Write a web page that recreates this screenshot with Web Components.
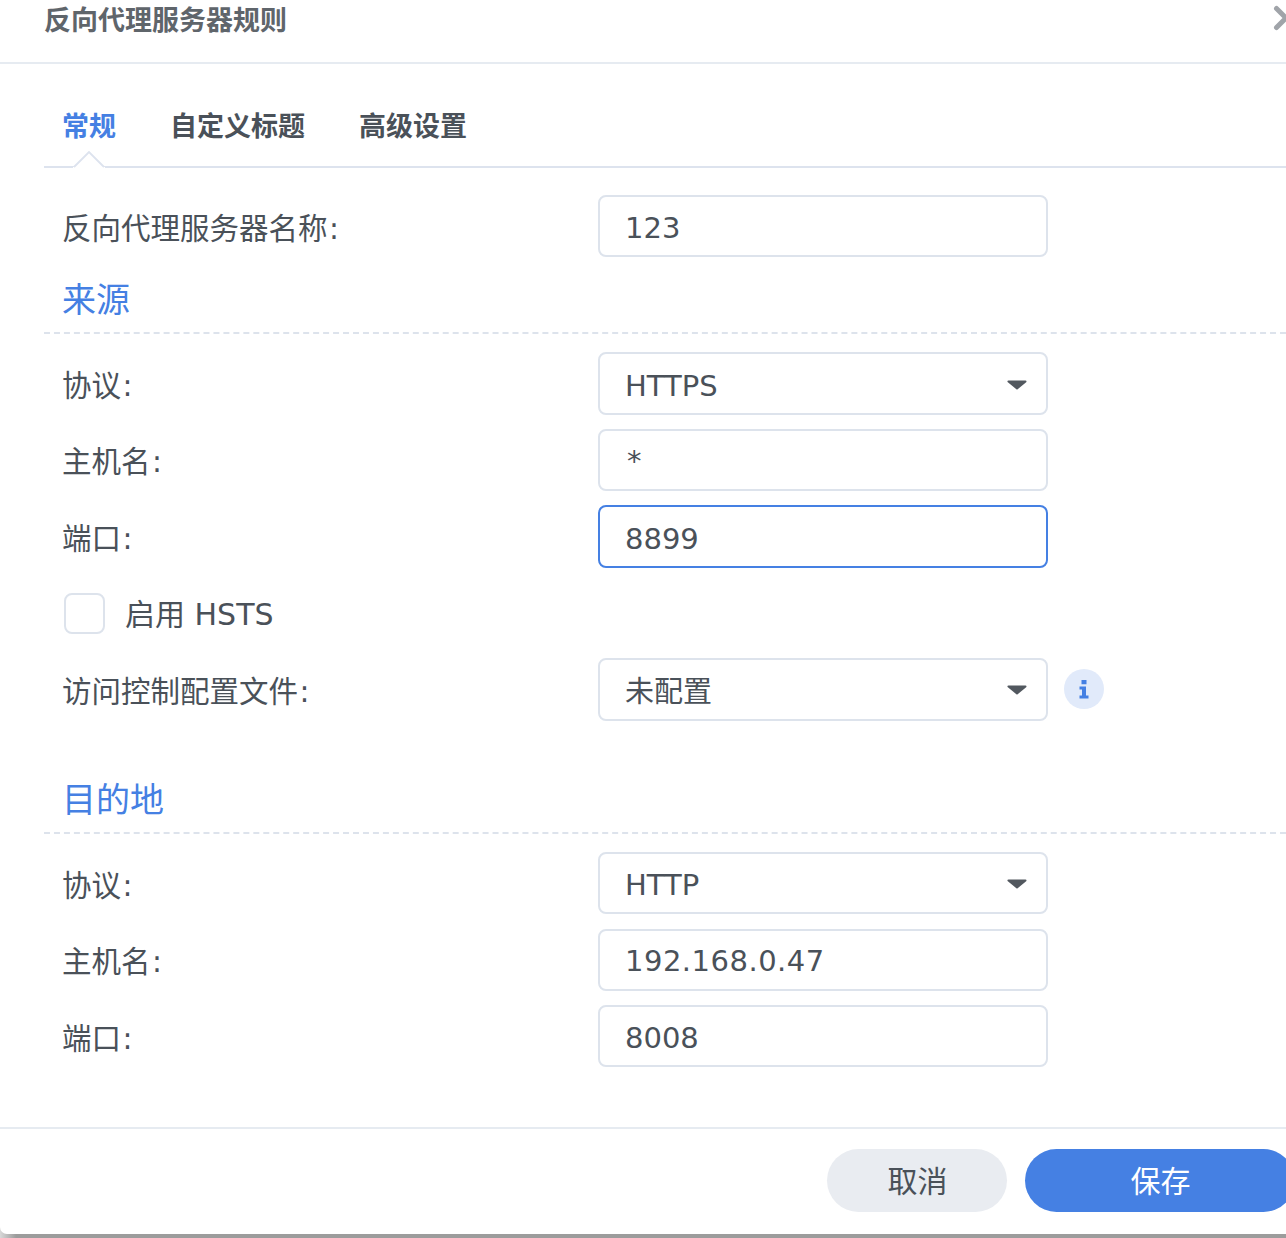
<!DOCTYPE html>
<html lang="zh-CN"><head><meta charset="utf-8"><title>反向代理服务器规则</title>
<style>
html,body{margin:0;padding:0;height:1238px;overflow:hidden}
body{background:linear-gradient(90deg,#d8d8d8 0,#9c9c9c 16px);font-family:"DejaVu Sans","Noto Sans CJK SC",sans-serif;color:#4a5159}
</style></head><body>
<rp-dialog>
  <rp-header slot="header">反向代理服务器规则</rp-header>
  <rp-tabs slot="tabs"><span>常规</span><span>自定义标题</span><span>高级设置</span></rp-tabs>
  <rp-row style="margin-top:27px" label="反向代理服务器名称:"><rp-field style="--h:62px">123</rp-field></rp-row>
  <rp-section style="margin-top:21.500px">来源</rp-section>
  <rp-row style="margin-top:18px" label="协议:"><rp-field select style="--h:63px">HTTPS</rp-field></rp-row>
  <rp-row style="margin-top:14px" label="主机名:"><rp-field style="--pt:2px;--pl:2px">*</rp-field></rp-row>
  <rp-row style="margin-top:14px" label="端口:"><rp-field focus style="--h:63px">8899</rp-field></rp-row>
  <rp-check style="margin-top:25px">启用 HSTS</rp-check>
  <rp-row style="margin-top:24px" label="访问控制配置文件:"><rp-field select style="--pt:6px;--h:63px">未配置</rp-field><rp-info></rp-info></rp-row>
  <rp-section style="margin-top:59px">目的地</rp-section>
  <rp-row style="margin-top:18px" label="协议:"><rp-field select style="--h:62px">HTTP</rp-field></rp-row>
  <rp-row style="margin-top:14px" label="主机名:"><rp-field style="letter-spacing:.5px;--pt:3px">192.168.0.47</rp-field></rp-row>
  <rp-row style="margin-top:14px" label="端口:"><rp-field style="--h:62px;--pt:3px">8008</rp-field></rp-row>
  <rp-footer slot="footer"><rp-button>取消</rp-button><rp-button primary>保存</rp-button></rp-footer>
</rp-dialog>
<script>
function def(name,html,init){
  customElements.define(name,class extends HTMLElement{
    constructor(){super();this.attachShadow({mode:'open'}).innerHTML=html;}
    connectedCallback(){if(init)init(this);}
  });
}
const font='font-family:"DejaVu Sans","Noto Sans CJK SC",sans-serif;';
def('rp-dialog',`<style>:host{display:block;width:1286px;height:1234px;background:#fff;overflow:hidden;border-radius:0 0 0 7px;${font}color:#4a5159}
.wrap{display:flex;flex-direction:column}</style><div class="wrap"><slot name="header"></slot><slot name="tabs"></slot><slot></slot><slot name="footer"></slot></div>`);
def('rp-header',`<style>:host{display:flex;height:62px;border-bottom:2px solid #e6ebf1;padding-left:44px;font-size:27px;line-height:42px;font-weight:700;color:#5f656b;overflow:hidden}
.t{flex:1}svg{display:block;width:14px;height:40px;flex:none}</style><div class="t"><slot></slot></div>
<svg viewBox="0 0 14 40"><path d="M4.500 8.500 L14 18 L4.500 27.500 M24 8.500 L14 18 L24 27.500" fill="none" stroke="#a0a4a9" stroke-width="5" stroke-linecap="round"/></svg>`);
def('rp-tabs',`<style>:host{display:block;position:relative;margin-left:44px;height:102px;border-bottom:2px solid #dde3ee}
.t{display:flex;gap:54px;padding:43px 0 0 18px;font-size:27px;line-height:40px;font-weight:700;color:#4a5159}
::slotted(span:first-child){color:#4580e3}
svg{position:absolute;left:29px;bottom:-2px;width:32px;height:17px;display:block}</style>
<div class="t"><slot></slot></div>
<svg viewBox="0 0 32 17"><path d="M0 16 H1 L16 1 L31 16 H32 V17 H0Z" fill="#fff"/><path d="M1 16 L16 1 L31 16" fill="none" stroke="#dde3ee" stroke-width="1.800"/></svg>`);
def('rp-row',`<style>:host{display:grid;grid-template-columns:536px 450px auto;height:62.500px;padding-left:62px;align-items:center;font-size:29.500px;color:#4a5159}
.l{line-height:40px;white-space:nowrap;padding-top:5px}.c{padding-left:1.500px}</style><div class="l"></div><slot></slot>`,
el=>{const l=el.getAttribute('label'),b=el.shadowRoot.querySelector('.l');
  b.textContent=l.slice(0,-1);const c=document.createElement('span');c.className='c';c.textContent=l.slice(-1);b.append(c);});
def('rp-field',`<style>:host{display:flex;align-self:start;align-items:center;box-sizing:border-box;height:var(--h,62.500px);width:450px;border:2px solid #dde3ec;border-radius:8px;padding:0 19px 0 25px;background:#fff;font-size:29px;line-height:40px;color:#4a5159}
:host([focus]){border-color:#4580e3}
.v{flex:1;white-space:nowrap;padding-top:var(--pt,4px);padding-left:var(--pl,0)}svg{display:none;width:20px;height:10px;flex:none;margin-top:2px}
:host([select]) svg{display:block}</style><div class="v"><slot></slot></div>
<svg viewBox="0 0 20 10"><path d="M1.500 1.500 H18.500 L10 8.500Z" fill="#52585f" stroke="#52585f" stroke-width="2" stroke-linejoin="round"/></svg>`);
def('rp-section',`<style>:host{display:block;margin-left:44px;height:53px;border-bottom:2px dashed #dde3ec;padding-left:18px;font-size:34px;line-height:43px;color:#4580e3}</style><slot></slot>`);
def('rp-check',`<style>:host{display:flex;align-items:center;height:41px;padding-left:64px;font-size:30px;color:#4a5159}
.b{box-sizing:border-box;width:41px;height:41px;border:2px solid #dde3ec;border-radius:8px;margin-right:20px;background:#fff}
.t{line-height:40px;padding-top:4px}</style><div class="b"></div><div class="t"><slot></slot></div>`);
def('rp-info',`<style>:host{display:block;width:40px;height:40px;margin-left:16px}
svg{display:block;width:40px;height:40px}</style>
<svg viewBox="0 0 40 40"><circle cx="20" cy="20" r="20" fill="#e1eafa"/><path d="M17.500 11h5v4.200h-5zM15.500 17.500h6.500v9h2.500v3h-9v-3h2.500v-6h-2.500z" fill="#4580e3"/></svg>`);
def('rp-footer',`<style>:host{display:flex;gap:18px;margin-top:59.500px;border-top:2px solid #e6ebf1;padding:20px 0 0 827px;width:calc(100% + 40px);box-sizing:border-box}</style><slot></slot>`);
def('rp-button',`<style>:host{display:flex;align-items:center;justify-content:center;box-sizing:border-box;flex:none;height:63px;width:180px;border-radius:32px;background:#e9ecf1;color:#4a5159;font-size:30px;line-height:40px;padding:2px 0 0 1px}
:host([primary]){width:270px;background:#4580e3;color:#fff}</style><slot></slot>`);
</script>
</body></html>
